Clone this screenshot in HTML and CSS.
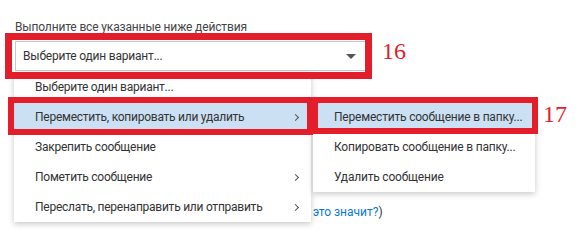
FILE: index.html
```html
<!DOCTYPE html>
<html lang="ru">
<head>
  <meta charset="UTF-8" />
  <meta name="viewport" content="width=device-width, initial-scale=1.0">
  <title>Правило</title>
  <link rel="stylesheet" href="styles.css">
</head>
<body>

  <div class="page">
    <div class="field-label">Выполните все указанные ниже действия</div>
    <div class="select">
      <span>Выберите один вариант...</span>
      <span class="caret"></span>
    </div>
    <p class="note">(<a href="#">Что это значит?</a>)</p>
  </div>

  <!-- Выпадающее меню -->
  <ul class="menu">
    <li>Выберите один вариант...</li>
    <li class="active">Переместить, копировать или удалить <span class="chev"></span></li>
    <li>Закрепить сообщение</li>
    <li>Пометить сообщение <span class="chev"></span></li>
    <li>Переслать, перенаправить или отправить <span class="chev"></span></li>
  </ul>

  <ul class="menu submenu">
    <li class="active">Переместить сообщение в папку...</li>
    <li>Копировать сообщение в папку...</li>
    <li>Удалить сообщение</li>
  </ul>

  <!-- Пометки -->
  <div class="mark mark-16"></div>
  <div class="mark mark-item"></div>
  <div class="mark mark-17"></div>
  <span class="num num-16">16</span>
  <span class="num num-17">17</span>

</body>
</html>
```

FILE: styles.css
```css
:root {
  --rojo: #e41d2a;
  --texto: #333333;
  --borde: #c8c8c8;
  --activo: #cce0f3;
}
* { box-sizing: border-box; }
body {
  margin: 0;
  font-family: Roboto, sans-serif;
  font-size: 12px;
  color: var(--texto);
  background: #ffffff;
}
.page {
  padding: 19px 0 0 15px;
}
.field-label {
  line-height: 16px;
  color: #444;
  letter-spacing: -0.15px;
}
.select {
  display: flex;
  align-items: center;
  justify-content: space-between;
  margin-top: 6px;
  width: 351px;
  height: 30px;
  padding: 0 9px 0 7px;
  border: 1px solid var(--borde);
  letter-spacing: -0.2px;
}
.caret {
  width: 0;
  height: 0;
  border-left: 5px solid transparent;
  border-right: 5px solid transparent;
  border-top: 5px solid #555;
}
.note {
  margin: 133px 0 0 270px;
  line-height: 16px;
}
.note a {
  color: #0a78d2;
  text-decoration: none;
}
.menu {
  position: absolute;
  left: 14px;
  top: 72px;
  width: 297px;
  margin: 0;
  padding: 0;
  list-style: none;
  background: #ffffff;
  box-shadow: 0 2px 6px rgba(0,0,0,0.22);
  letter-spacing: -0.25px;
}
.menu li {
  display: flex;
  align-items: center;
  justify-content: space-between;
  height: 30px;
  padding: 0 13px 0 21px;
  white-space: nowrap;
}
.menu li.active {
  background: var(--activo);
}
.chev {
  width: 5px;
  height: 5px;
  border-right: 1.3px solid #555;
  border-bottom: 1.3px solid #555;
  transform: rotate(-45deg);
}
.submenu {
  left: 313px;
  top: 102px;
  width: 222px;
  letter-spacing: -0.2px;
}
.submenu li {
  padding-left: 21px;
}
.mark {
  position: absolute;
  border: 6px solid var(--rojo);
}
.mark-16 {
  left: 5px;
  top: 33px;
  width: 367px;
  height: 46px;
  border-width: 7px;
}
.mark-item {
  left: 8px;
  top: 97px;
  width: 305px;
  height: 38px;
}
.mark-17 {
  left: 312px;
  top: 97px;
  width: 226px;
  height: 37px;
}
.num {
  position: absolute;
  font-family: 'Liberation Serif', serif;
  font-size: 24px;
  line-height: 24px;
  color: var(--rojo);
}
.num-16 { left: 382px; top: 39px; }
.num-17 { left: 543px; top: 102px; }
```
